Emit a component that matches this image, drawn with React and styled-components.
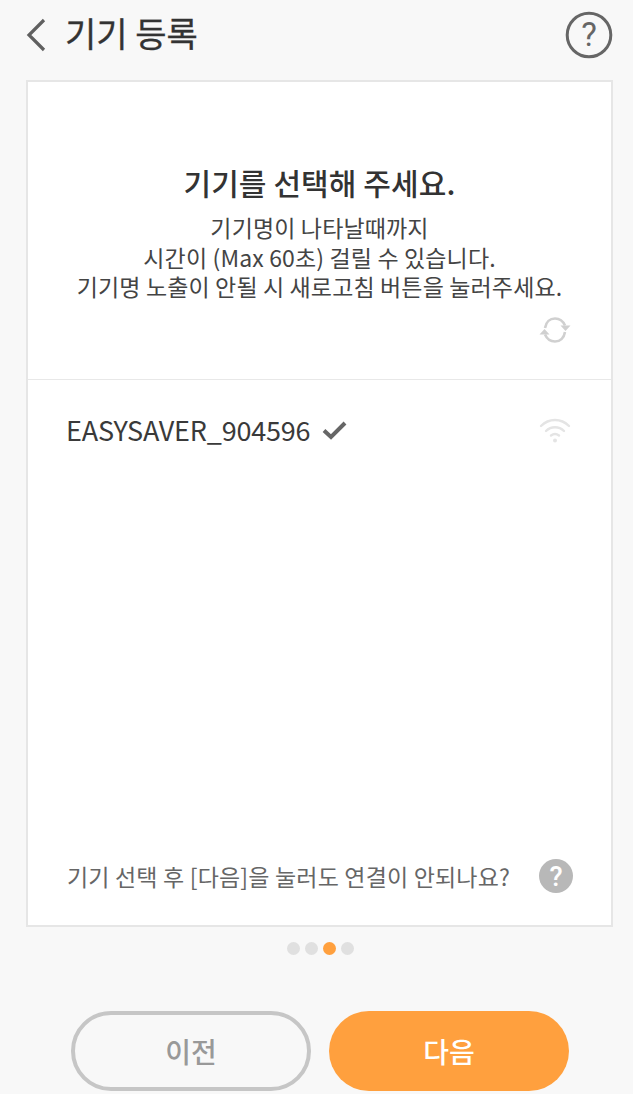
import React from "react";
import styled, { createGlobalStyle } from "styled-components";

const Global = createGlobalStyle`
  html, body { margin: 0; padding: 0; background: #f8f8f8; }
  body { font-family: "Noto Sans CJK KR", "Noto Sans", sans-serif; }
  * { box-sizing: border-box; }
`;

const Page = styled.div`
  width: 633px;
  height: 1094px;
  overflow: hidden;
  background: #f8f8f8;
  display: flex;
  flex-direction: column;
  padding: 0 20px 0 26px;
`;

const Header = styled.header`
  height: 80px;
  display: flex;
  align-items: center;
  justify-content: space-between;
  padding-bottom: 10px;
`;

const HeaderLeft = styled.div`
  display: flex;
  align-items: center;
  gap: 19px;
`;

const Title = styled.h1`
  margin: 0 0 4px;
  font-size: 34px;
  line-height: 40px;
  font-weight: 400;
  color: #333;
  -webkit-text-stroke: 0.3px #333;
`;

const Card = styled.section`
  width: 587px;
  height: 847px;
  background: #fff;
  border: 2px solid #e6e6e6;
  display: flex;
  flex-direction: column;
`;

const Intro = styled.div`
  height: 298px;
  border-bottom: 1px solid #e8e8e8;
  padding-top: 79px;
  display: flex;
  flex-direction: column;
  align-items: center;
`;

const Heading = styled.h2`
  margin: 0 0 10px;
  font-size: 30px;
  line-height: 42px;
  font-weight: 500;
  color: #333;
  letter-spacing: 0.1px;
`;

const Desc = styled.p`
  margin: 0;
  font-size: 23px;
  line-height: 29.5px;
  text-align: center;
  color: #444;
  letter-spacing: 0.14px;
  white-space: nowrap;
`;

const RefreshRow = styled.div`
  align-self: flex-end;
  margin: 13px 40px 0 0;
  display: flex;
`;

const DeviceRow = styled.div`
  display: flex;
  align-items: center;
  justify-content: space-between;
  padding: 30px 40px 0 38px;
`;

const DeviceLeft = styled.div`
  display: flex;
  align-items: center;
  gap: 12px;
`;

const DeviceName = styled.span`
  font-size: 27px;
  line-height: 40px;
  color: #3a3a3a;
  letter-spacing: -0.2px;
  font-weight: 400;
`;

const Spacer = styled.div`
  flex: 1;
`;

const HelpRow = styled.div`
  height: 66px;
  display: flex;
  align-items: flex-start;
  justify-content: space-between;
  padding: 0 38px 0 39px;
`;

const HelpText = styled.span`
  font-size: 23px;
  line-height: 34px;
  color: #666;
  letter-spacing: 0.18px;
`;

const Dots = styled.div`
  height: 42px;
  display: flex;
  align-items: center;
  justify-content: center;
  gap: 5px;
  padding-left: 1px;
`;

const Dot = styled.span`
  width: 13px;
  height: 13px;
  border-radius: 50%;
  background: ${(p) => (p.$active ? "#ffa03e" : "#e0e0e0")};
`;

const Actions = styled.div`
  display: flex;
  gap: 18px;
  padding: 42px 0 0 45px;
`;

const Btn = styled.button`
  width: 240px;
  height: 80px;
  border-radius: 40px;
  font-family: inherit;
  font-size: 28px;
  font-weight: 500;
  padding: 0;
  border: ${(p) => (p.$primary ? "none" : "4px solid #c6c6c6")};
  background: ${(p) => (p.$primary ? "#ffa03e" : "transparent")};
  color: ${(p) => (p.$primary ? "#fff" : "#999")};
`;

export default function App() {
  return (
    <Page>
      <Global />
      <Header>
        <HeaderLeft>
          <svg width="20" height="34" viewBox="0 0 20 34" fill="none">
            <path d="M18 2 3 17l15 15" stroke="#606060" strokeWidth="3.2" />
          </svg>
          <Title>기기 등록</Title>
        </HeaderLeft>
        <svg width="48" height="48" viewBox="0 0 48 48" fill="none">
          <circle cx="24" cy="24" r="21.800" stroke="#666" strokeWidth="3" />
          <text x="24" y="35" textAnchor="middle" fontSize="33" fontWeight="400" fill="#666" fontFamily="Roboto, sans-serif">?</text>
        </svg>
      </Header>
      <Card>
        <Intro>
          <Heading>기기를 선택해 주세요.</Heading>
          <Desc>
            기기명이 나타날때까지
            <br />
            시간이 (Max 60초) 걸릴 수 있습니다.
            <br />
            기기명 노출이 안될 시 새로고침 버튼을 눌러주세요.
          </Desc>
          <RefreshRow>
            <svg width="32" height="30" viewBox="0 0 32 30" fill="none">
              <path d="M6 13C7 7 11 3.500 16 3.500c4.500 0 8 2.500 10 7" stroke="#d0d0d0" strokeWidth="2.6" />
              <path d="M26 17c-1 6-5 9.500-10 9.500-4.500 0-8-2.500-10-7" stroke="#d0d0d0" strokeWidth="2.6" />
              <path d="M31.500 10.500 26.500 16l-5-5.500z M0.500 19.500 5.500 14l5 5.500z" fill="#d0d0d0" />
            </svg>
          </RefreshRow>
        </Intro>
        <DeviceRow>
          <DeviceLeft>
            <DeviceName>EASYSAVER_904596</DeviceName>
            <svg width="25" height="20" viewBox="0 0 25 20" fill="none">
              <path d="M2 10.500 9 17 23 3" stroke="#666" strokeWidth="4" />
            </svg>
          </DeviceLeft>
          <svg width="32" height="26" viewBox="0 0 32 26" fill="none" stroke="#e4e4e4" strokeWidth="2.4" strokeLinecap="round">
            <path d="M2 9C10 1 22 1 30 9" />
            <path d="M7 14c5-5 13-5 18 0" />
            <path d="M12 18.500c2.500-2 5.500-2 8 0" />
            <circle cx="16" cy="23.500" r="2" fill="#e4e4e4" stroke="none" />
          </svg>
        </DeviceRow>
        <Spacer />
        <HelpRow>
          <HelpText>기기 선택 후 [다음]을 눌러도 연결이 안되나요?</HelpText>
          <svg width="34" height="34" viewBox="0 0 34 34">
            <circle cx="17" cy="17" r="17" fill="#b8b8b8" />
            <text x="17" y="26.500" textAnchor="middle" fontSize="27" fontWeight="500" fill="#fff" fontFamily="Roboto, sans-serif">?</text>
          </svg>
        </HelpRow>
      </Card>
      <Dots>
        <Dot />
        <Dot />
        <Dot $active />
        <Dot />
      </Dots>
      <Actions>
        <Btn>이전</Btn>
        <Btn $primary>다음</Btn>
      </Actions>
    </Page>
  );
}
